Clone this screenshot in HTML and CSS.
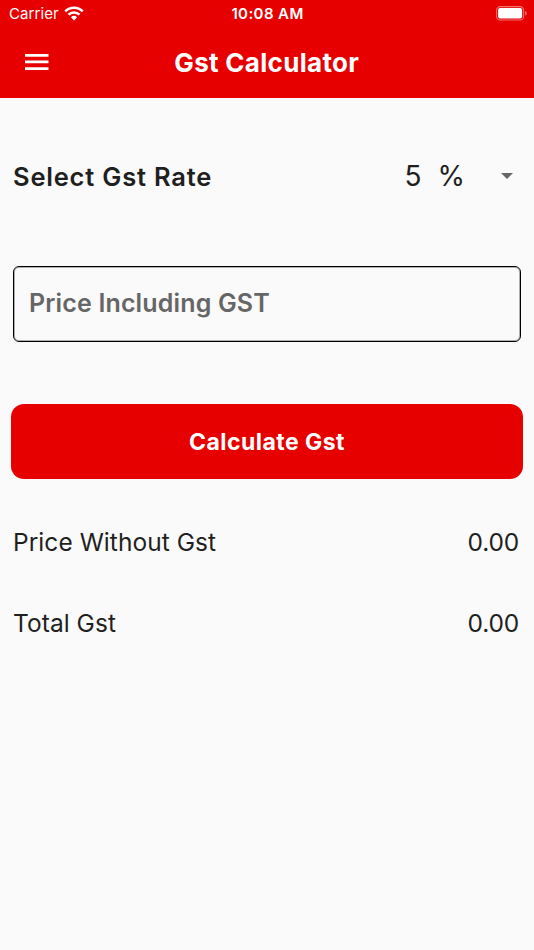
FILE: index.html
```html
<!DOCTYPE html>
<html lang="en">
<head>
  <meta charset="UTF-8">
  <meta name="viewport" content="width=device-width, initial-scale=1">
  <title>Gst Calculator</title>
  <link rel="stylesheet" href="styles.css">
</head>
<body>
  <header class="header">
    <div class="status">
      <div class="carrier">
        <span>Carrier</span>
        <svg class="wifi" viewBox="0 0 20 15">
          <path d="M1.3 5.4a12.3 12.3 0 0 1 17.4 0M4.5 8.7a7.8 7.8 0 0 1 11 0" fill="none" stroke="#fff" stroke-width="2.6"/>
          <path d="M10 14.4l-3.1-3.1a4.5 4.5 0 0 1 6.2 0z" fill="#fff"/>
        </svg>
      </div>
      <span class="time">10:08 AM</span>
      <svg class="battery" viewBox="0 0 32 15">
        <rect x=".6" y=".6" width="27" height="13.4" rx="3.6" fill="none" stroke="#fff" stroke-opacity=".45" stroke-width="1.1"/>
        <rect x="2.1" y="2.1" width="24" height="10.4" rx="2" fill="#fff"/>
        <path d="M29.2 5c2 .8 2 3.8 0 4.6z" fill="#fff" fill-opacity=".5"/>
      </svg>
    </div>
    <div class="appbar">
      <svg class="menu" viewBox="0 0 24 16">
        <path d="M0 0h23.500v2.700H0zM0 6.600h23.500v2.700H0zM0 13.200h23.500v2.700H0z" fill="#fff"/>
      </svg>
      <h1 class="title">Gst Calculator</h1>
    </div>
  </header>
  <main class="main">
    <div class="rate">
      <span class="rate-label">Select Gst Rate</span>
      <div class="select">
        <span class="rate-value">5</span>
        <span class="rate-unit">%</span>
        <svg class="arrow" viewBox="0 0 12 6"><path d="M0 0h12L6 6z" fill="#666"/></svg>
      </div>
    </div>
    <input class="price" type="text" placeholder="Price Including GST">
    <button class="calculate">Calculate Gst</button>
    <div class="result">
      <span class="without">Price Without Gst</span>
      <span class="amount">0.00</span>
    </div>
    <div class="result">
      <span class="total">Total Gst</span>
      <span class="amount">0.00</span>
    </div>
  </main>
</body>
</html>
```
FILE: styles.css
```css
* {
  margin: 0;
  padding: 0;
  box-sizing: border-box;
}
html, body {
  height: 100%;
  background-color: #fafafa;
}
body {
  font-family: Inter, "Liberation Sans", sans-serif;
  color: #1f1f1f;
}
svg {
  display: block;
}
.header {
  height: 98px;
  color: #fff;
  background-color: #e70000;
}
.status {
  display: grid;
  grid-template-columns: 1fr auto 1fr;
  align-items: center;
  height: 27px;
  padding: 0 8px 0 9px;
  font-size: 15px;
}
.carrier {
  display: flex;
  align-items: center;
  gap: 5px;
  letter-spacing: .1px;
}
.wifi {
  width: 20px;
  height: 15px;
}
.time {
  font-weight: 600;
  letter-spacing: .4px;
}
.battery {
  justify-self: end;
  width: 32px;
  height: 15px;
  margin-right: -2px;
}
.appbar {
  display: grid;
  grid-template-columns: 1fr auto 1fr;
  align-items: center;
  height: 70px;
  padding: 0 25px 0 24.5px;
}
.menu {
  width: 24px;
  height: 16px;
}
.title {
  font-size: 26px;
  font-weight: 700;
  letter-spacing: .3px;
}
/* 内容区 */
.main {
  padding: 47px 11px 0;
}
.rate {
  display: flex;
  align-items: center;
  justify-content: space-between;
  height: 62px;
  padding: 0 10px 0 2px;
}
.rate-label {
  font-size: 25.5px;
  font-weight: 600;
  letter-spacing: .8px;
}
.select {
  display: flex;
  align-items: center;
  font-size: 28px;
}
.rate-value {
  margin: 0 -.5px 0 0;
}
.rate-unit {
  margin-left: 16.5px;
}
.arrow {
  width: 12px;
  height: 6px;
  margin-left: 36px;
}
.price {
  display: block;
  width: 508px;
  height: 76px;
  margin: 59px 2px 0;
  padding: 0 15px 3px;
  border: 1px solid #000;
  border-radius: 6px;
  background: none;
  box-shadow: inset 0 0 0 1px rgb(0 0 0 / 30%);
  font: 600 25px Inter, "Liberation Sans", sans-serif;
  letter-spacing: .15px;
}
.price::placeholder {
  color: #666;
  opacity: 1;
}
.calculate {
  display: block;
  width: 100%;
  height: 75px;
  margin-top: 62px;
  border: 0;
  border-radius: 13px;
  color: #fff;
  background-color: #e70000;
  font: 700 23px Inter, "Liberation Sans", sans-serif;
  letter-spacing: .45px;
}
.result {
  display: flex;
  align-items: center;
  justify-content: space-between;
  height: 81px;
  padding: 0 4px 0 2px;
  font-size: 24.5px;
  letter-spacing: .05px;
}
.amount {
  letter-spacing: -.2px;
}
.calculate + .result {
  margin-top: 22px;
}
```
